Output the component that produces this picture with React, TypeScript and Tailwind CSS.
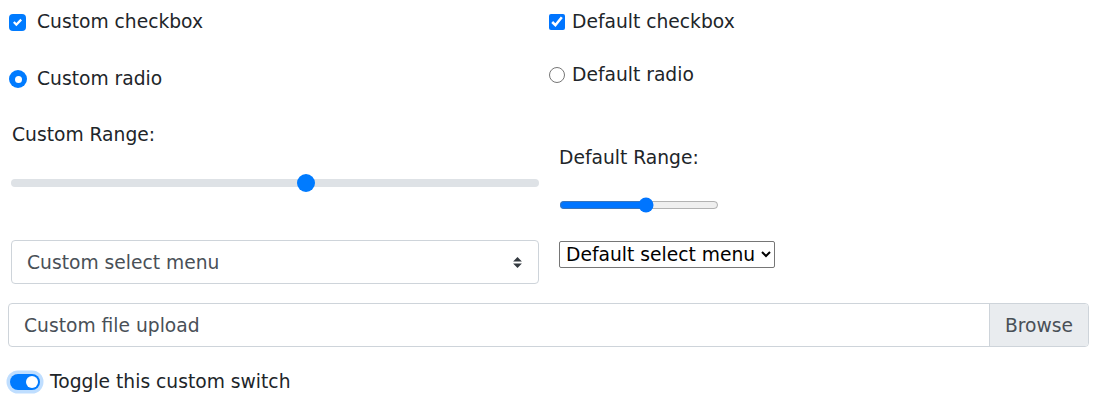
import React from "react";

function CheckIcon() {
  return (
    <svg viewBox="0 0 8 8" className="h-[9px] w-[9px]">
      <path fill="#fff" d="M6.564.75l-3.59 3.612-1.538-1.55L0 4.26l2.974 2.99L8 2.193z" />
    </svg>
  );
}

export default function App() {
  return (
    <div className="w-[1096px] h-[408px] bg-white text-[#212529] font-['DejaVu_Sans',sans-serif] text-[18.7px] leading-[28px] overflow-hidden">
      <div className="flex pl-[9px]">
        {/* left column */}
        <div className="w-[530px] flex flex-col">
          <label className="mt-[8px] flex items-center h-[28px]">
            <span className="w-[17px] h-[17px] rounded-[4px] bg-[#007bff] flex items-center justify-center">
              <CheckIcon />
            </span>
            <span className="ml-[11px]">Custom checkbox</span>
          </label>

          <label className="mt-[29px] flex items-center h-[28px]">
            <span className="w-[18px] h-[18px] rounded-full bg-[#007bff] flex items-center justify-center">
              <span className="w-[7px] h-[7px] rounded-full bg-white" />
            </span>
            <span className="ml-[10px]">Custom radio</span>
          </label>

          <div className="mt-[28px] h-[28px] ml-[3px]">Custom Range:</div>

          {/* custom range */}
          <div className="mt-[24px] h-[20px] ml-[2px] relative flex items-center">
            <div className="w-full h-[8px] rounded-full bg-[#dee2e6]" />
            <div className="absolute left-[286px] top-px w-[18px] h-[18px] rounded-full bg-[#007bff]" />
          </div>

          {/* custom select */}
          <div className="mt-[47px] ml-[2px] h-[44px] border border-[#ced4da] rounded-[4px] flex items-center justify-between pl-[15px] pr-[16px] pt-px text-[#495057]">
            <span>Custom select menu</span>
            <svg viewBox="0 0 4 5" className="w-[9px] h-[11px]">
              <path fill="#343a40" d="M2 0L0 2h4zm0 5L0 3h4z" />
            </svg>
          </div>
        </div>

        {/* right column */}
        <div className="ml-[10px] flex flex-col">
          <label className="mt-[8px] flex items-center h-[28px]">
            <input type="checkbox" defaultChecked className="w-[16px] h-[16px] m-0" />
            <span className="ml-[7px]">Default checkbox</span>
          </label>

          <label className="mt-[25px] flex items-center h-[28px]">
            <input type="radio" name="r" className="w-[16px] h-[16px] m-0" />
            <span className="ml-[7px]">Default radio</span>
          </label>

          <div className="mt-[55px] h-[28px] ml-[10px]">Default Range:</div>

          <div className="mt-[23px] h-[20px] ml-[10px] flex items-center">
            <input type="range" defaultValue={55} className="w-[160px] m-0" />
          </div>

          <div className="mt-[26px] ml-[10px]">
            <select className="h-[27px] border border-[#767676] rounded-[2px] leading-[21px] text-black pl-[2px] pr-[2px]">
              <option>Default select menu</option>
            </select>
          </div>
        </div>
      </div>

      {/* custom file */}
      <div className="mt-[19px] ml-[8px] w-[1081px] h-[44px] border border-[#ced4da] rounded-[4px] flex text-[#495057] overflow-hidden">
        <div className="flex-1 flex items-center pl-[15px] pt-px">Custom file upload</div>
        <div className="w-[99px] bg-[#e9ecef] border-l border-[#ced4da] flex items-center justify-center pt-px">
          Browse
        </div>
      </div>

      {/* custom switch */}
      <label className="mt-[21px] ml-[10px] flex items-center h-[28px]">
        <span className="w-[30px] h-[16px] rounded-full bg-[#007bff] flex items-center justify-end pr-[2px] shadow-[0_0_0_3.5px_rgba(0,123,255,0.25)]">
          <span className="w-[12px] h-[12px] rounded-full bg-white" />
        </span>
        <span className="ml-[10px]">Toggle this custom switch</span>
      </label>
    </div>
  );
}
